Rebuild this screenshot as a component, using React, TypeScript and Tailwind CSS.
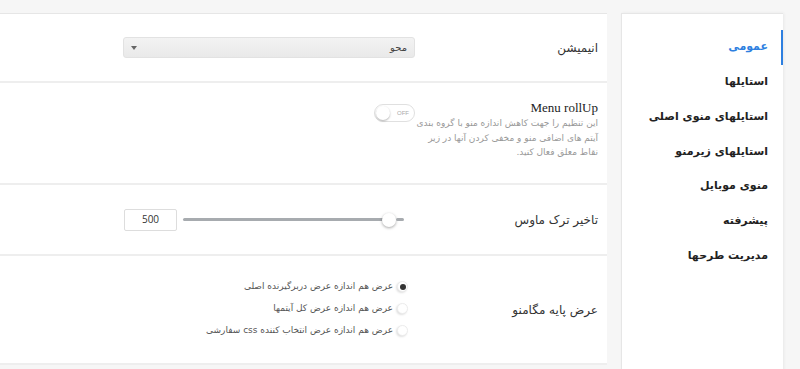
import React from 'react';

const fa = { fontFamily: '"DejaVu Sans", "Noto Sans", sans-serif' };

const menuItems = [
  'عمومی',
  'استایلها',
  'استایلهای منوی اصلی',
  'استایلهای زیرمنو',
  'منوی موبایل',
  'پیشرفته',
  'مدیریت طرحها',
];

const radios = [
  { label: 'عرض هم اندازه عرض دربرگیرنده اصلی', checked: true },
  { label: 'عرض هم اندازه عرض کل آیتمها', checked: false },
  { label: 'عرض هم اندازه عرض انتخاب کننده css سفارشی', checked: false },
];

const Radio: React.FC<{ checked: boolean }> = ({ checked }) => (
  <span className="w-[11px] h-[11px] rounded-full bg-white border border-[#ececec] shadow-[-1px_1px_2px_rgba(0,0,0,0.12)] flex items-center justify-center shrink-0">
    {checked && <span className="w-[6px] h-[6px] rounded-full bg-[#333]"></span>}
  </span>
);

const App: React.FC = () => {
  return (
    <div
      dir="rtl"
      style={fa}
      className="w-[800px] h-[369px] overflow-hidden bg-[#f6f6f6] flex items-start pt-[13px] pr-[17px] gap-[14px]"
    >
      {/* Sidebar */}
      <div className="w-[162px] h-[400px] shrink-0 bg-white border-t border-l border-[#e6e6e6] pt-[16px] shadow-[1px_0_3px_rgba(0,0,0,0.06)]">
        {menuItems.map((item, i) => (
          <div
            key={item}
            className={
              i === 0
                ? 'h-[34.8px] flex items-center pr-[13px] border-r-[2px] border-[#2d7fe0] text-[#2d7fe0] text-[11px] font-bold'
                : 'h-[34.8px] flex items-center pr-[15px] text-[#222] text-[11px] font-bold'
            }
          >
            {item}
          </div>
        ))}
      </div>

      {/* Main panel */}
      <div className="w-[607px] shrink-0 bg-white border-t border-[#e6e6e6]">
        {/* Animation */}
        <div className="h-[69px] flex items-center border-b-2 border-[#eeeeee]">
          <div className="w-[192px] pr-[9px] text-[12px] text-[#333]">انیمیشن</div>
          <div className="w-[292px] h-[21px] rounded-[3px] border border-[#e2e2e2] bg-gradient-to-b from-[#f3f3f3] to-[#e9e9e9] flex items-center justify-between px-[7px]">
            <span className="text-[10px] text-[#444]">محو</span>
            <span className="w-0 h-0 border-l-[3px] border-r-[3px] border-t-[4px] border-l-transparent border-r-transparent border-t-[#666]"></span>
          </div>
        </div>

        {/* Menu rollUp */}
        <div className="h-[102px] flex items-start border-b-2 border-[#eeeeee]">
          <div className="w-[192px] pr-[9px] pt-[17px]">
            <div className="text-[13px] text-[#222] leading-[16px]" style={{ fontFamily: '"Liberation Serif", serif' }}>
              Menu rollUp
            </div>
            <div className="text-[9px] text-[#999] leading-[14.5px] whitespace-nowrap">
              این تنظیم را جهت کاهش اندازه منو با گروه بندی
              <br />
              آیتم های اضافی منو و مخفی کردن آنها در زیر
              <br />
              نقاط معلق فعال کنید.
            </div>
          </div>
          <div className="pt-[21px]">
            <div className="w-[41px] h-[18px] rounded-full border border-[#e0e0e0] bg-white flex items-center justify-between pl-[1px] pr-[5px]" dir="ltr">
              <span className="w-[14px] h-[14px] rounded-full bg-white shadow-[0_1px_2px_rgba(0,0,0,0.3)]"></span>
              <span className="text-[6px] text-[#aaa]" style={{ fontFamily: '"Liberation Sans", sans-serif' }}>OFF</span>
            </div>
          </div>
        </div>

        {/* Mouse out delay */}
        <div className="h-[71px] flex items-center border-b-2 border-[#eeeeee]">
          <div className="w-[192px] pr-[9px] text-[12px] text-[#333]">تاخیر ترک ماوس</div>
          <div className="flex items-center gap-[6px] pr-[11px]" dir="ltr">
            <div className="w-[53px] h-[22px] border border-[#dddddd] rounded-[2px] flex items-center justify-center text-[10px] text-[#333]" style={{ fontFamily: '"Open Sans", sans-serif' }}>
              500
            </div>
            <div className="w-[221px] h-[16px] flex items-center">
              <div className="w-[205px] h-[3px] bg-[#a7abaf] rounded-full"></div>
              <span className="w-[14px] h-[14px] -ml-[6px] rounded-full bg-white shadow-[0_1px_3px_rgba(0,0,0,0.35)] shrink-0"></span>
              <div className="w-[8px] h-[3px] bg-[#a7abaf] rounded-full"></div>
            </div>
          </div>
        </div>

        {/* Mega menu width */}
        <div className="h-[109px] flex items-center border-b-2 border-[#eeeeee]">
          <div className="w-[192px] pr-[9px] text-[12px] text-[#333]">عرض پایه مگامنو</div>
          <div className="flex flex-col gap-[10px] pr-[7px] pb-[2px]">
            {radios.map((r) => (
              <label key={r.label} className="flex items-center gap-[4px] h-[12px] text-[9px] text-[#555]">
                <Radio checked={r.checked} />
                <span>{r.label}</span>
              </label>
            ))}
          </div>
        </div>
      </div>
    </div>
  );
};

export default App;
